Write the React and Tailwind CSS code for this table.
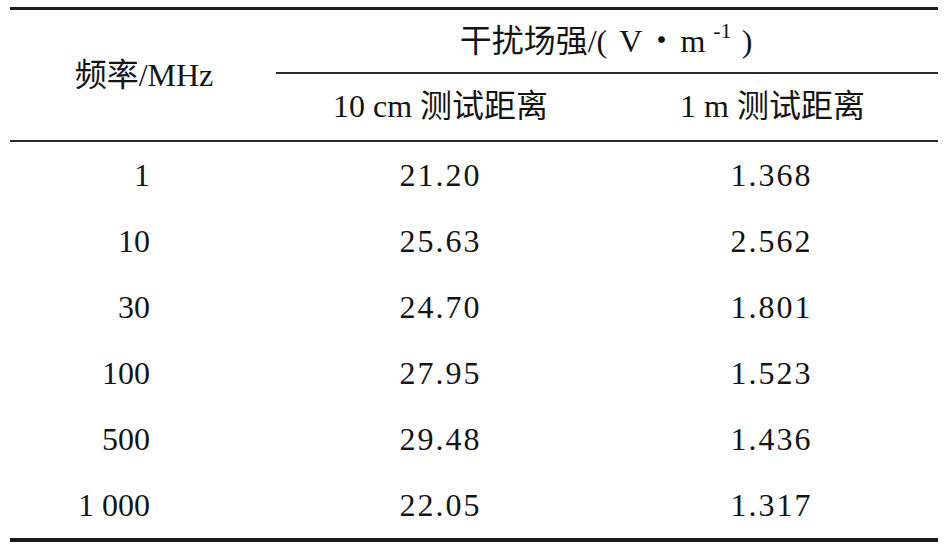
const rows = [
  { freq: "1", near: "21.20", far: "1.368" },
  { freq: "10", near: "25.63", far: "2.562" },
  { freq: "30", near: "24.70", far: "1.801" },
  { freq: "100", near: "27.95", far: "1.523" },
  { freq: "500", near: "29.48", far: "1.436" },
  { freq: "1 000", near: "22.05", far: "1.317" },
];

export default function App() {
  return (
    <div
      className="min-h-[544px] bg-white pt-[7px] pl-[10px] text-[32px] leading-none text-[#141414]"
      style={{ fontFamily: '"Liberation Serif", "Noto Sans CJK SC", serif' }}
    >
      <div className="w-[928px] border-t-[3px] border-b-[4px] border-[#1c1c1c]">
        {/* header */}
        <div className="flex border-b-2 border-[#2a2a2a]">
          <div className="w-[266px] h-[130px] flex items-center justify-center pl-[2px]">
            频率/MHz
          </div>
          <div className="flex-1 flex flex-col">
            <div className="h-[64px] flex items-center justify-center pr-[2px] border-b-2 border-[#2a2a2a]">
              <span className="flex items-center">
                <span>干扰场强/(</span>
                <span className="ml-[12px]">V</span>
                <span className="mx-[3px]">・</span>
                <span>m</span>
                <span className="relative -top-[10px] ml-[8px] text-[22px]">-1</span>
                <span className="ml-[10px]">)</span>
              </span>
            </div>
            <div className="h-[64px] grid grid-cols-[329px_333px]">
              <div className="flex items-center justify-center">10 cm 测试距离</div>
              <div className="flex items-center justify-center pl-[2px]">1 m 测试距离</div>
            </div>
          </div>
        </div>

        {/* body */}
        {rows.map((r) => (
          <div key={r.freq} className="h-[66px] grid grid-cols-[266px_329px_333px] items-center">
            <div className="text-right pr-[126px]">{r.freq}</div>
            <div className="text-center tracking-[2px]">{r.near}</div>
            <div className="text-center tracking-[2px]">{r.far}</div>
          </div>
        ))}
      </div>
    </div>
  );
}
